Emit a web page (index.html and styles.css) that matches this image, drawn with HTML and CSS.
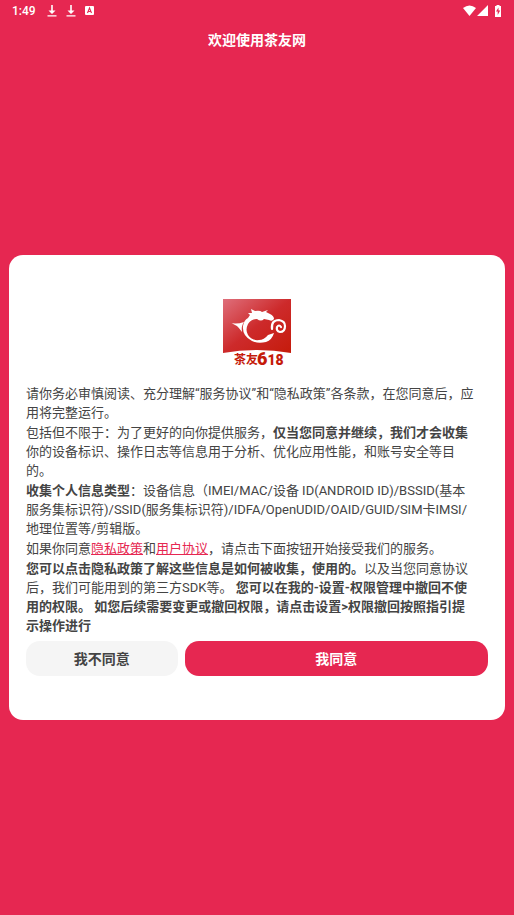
FILE: index.html
```html
<!DOCTYPE html>
<html lang="zh-CN">
<head>
    <meta charset="UTF-8">
    <meta name="viewport" content="width=device-width, initial-scale=1.0">
    <title>欢迎使用茶友网</title>
    <link rel="stylesheet" href="styles.css">
</head>
<body>
    <div class="status-bar">
        <div class="status-left">
            <span class="time">1:49</span>
            <svg class="download" width="10" height="12" viewBox="0 0 10 12" fill="#fff">
                <path d="M4.200 0h1.600v5.500h2.700L5 9 1.500 5.500h2.700zM0.500 10.300h9v1.300h-9z"/>
            </svg>
            <svg class="download" width="10" height="12" viewBox="0 0 10 12" fill="#fff">
                <path d="M4.200 0h1.600v5.500h2.700L5 9 1.500 5.500h2.700zM0.500 10.300h9v1.300h-9z"/>
            </svg>
            <svg class="app-icon" width="9" height="9" viewBox="0 0 9 9">
                <rect width="9" height="9" rx="1" fill="#fff"/>
                <path d="M2.500 7l2-5 2 5M3.300 5.500h2.400" fill="none" stroke="#e62751" stroke-width="1.100"/>
            </svg>
        </div>
        <svg class="status-right" width="40" height="12" viewBox="0 0 40 12" fill="#fff">
            <path d="M1 3Q7.500-2 14 3L7.500 11zM26 0v11H15zM33 1H34.500V0h3v1H39v11h-6z"/>
            <path d="M36.500 2.500l-2.500 4h1.700v3.500l2.500-4.500H36.500z" fill="#e62751"/>
        </svg>
    </div>

    <header>
        <h1>欢迎使用茶友网</h1>
    </header>

    <main>
        <div class="card">
            <svg class="logo" width="68" height="68" viewBox="0 0 68 68" role="img" aria-label="茶友618">
                <defs>
                    <linearGradient id="logoBg" x1="0" y1="0" x2="1" y2="1">
                        <stop offset="0" stop-color="#df6f7b"/>
                        <stop offset="0.5" stop-color="#cd2a2b"/>
                        <stop offset="1" stop-color="#c51b0b"/>
                    </linearGradient>
                </defs>
                <path d="M0 0h68v54Q34 48 0 54z" fill="url(#logoBg)"/>
                <!-- dragon teapot -->
                <g fill="#fff">
                    <path d="M5 23q7 3 16 0q-3 4-2 10Q14 25 5 23z"/>
                    <path d="M25 19l2-3-2-2 4 0-1-4 4 2q5-1 7 1l6-2-2 2 4 2q4 2 4 5-2 3-5 1l-5-1q-3 3-7 0-6 0-9 5-3 6 0 11 4 6 11 5 5 0 9-5l6-2q-2 7-8 9-8 2-14-1-10-5-9-15 1-6 5-8z"/>
                </g>
                <path d="M49 30q-1-9 7-9 6 1 6 6 0 6-5 6-4-1-3-5 2-3 4 0" fill="none" stroke="#fff" stroke-width="2.200" stroke-linecap="round"/>
                <text class="logo-name" x="11" y="65">茶友</text>
                <text class="logo-number" x="34" y="66"><tspan class="logo-six">6</tspan>18</text>
            </svg>

            <div class="terms">
                <p>请你务必审慎阅读、充分理解“服务协议”和“隐私政策”各条款，在您同意后，应<br>用将完整运行。</p>
                <p>包括但不限于：为了更好的向你提供服务，<b>仅当您同意并继续，我们才会收集</b><br>你的设备标识、操作日志等信息用于分析、优化应用性能，和账号安全等目<br>的。</p>
                <p><b>收集个人信息类型</b>：设备信息（IMEI/MAC/设备 ID(ANDROID ID)/BSSID(基本<br>服务集标识符)/SSID(服务集标识符)/IDFA/OpenUDID/OAID/GUID/SIM卡IMSI/<br>地理位置等/剪辑版。</p>
                <p>如果你同意<a href="#privacy">隐私政策</a>和<a href="#agreement">用户协议</a>，请点击下面按钮开始接受我们的服务。</p>
                <p><b>您可以点击隐私政策了解这些信息是如何被收集，使用的。</b>以及当您同意协议<br>后，我们可能用到的第三方SDK等。 <b>您可以在我的-设置-权限管理中撤回不使<br>用的权限。 如您后续需要变更或撤回权限，请点击设置&gt;权限撤回按照指引提<br>示操作进行</b></p>
            </div>

            <div class="buttons">
                <button type="button" class="btn btn-refuse">我不同意</button>
                <button type="button" class="btn btn-agree">我同意</button>
            </div>
        </div>
    </main>
</body>
</html>
```
FILE: styles.css
```css
* {
    box-sizing: border-box;
}

body {
    margin: 0;
    min-height: 100vh;
    display: flex;
    flex-direction: column;
    background-color: #e62751;
    color: #444;
    font-family: Roboto, "Noto Sans CJK SC", sans-serif;
}

.status-bar {
    display: flex;
    justify-content: space-between;
    align-items: center;
    height: 21px;
    padding: 0 12px;
    color: #fff;
}

.status-left {
    display: flex;
    align-items: center;
}

.time {
    font-size: 12px;
    font-weight: 500;
    line-height: 20px;
    margin-right: 2px;
}

.download {
    margin-left: 9px;
}

.app-icon {
    margin-left: 9px;
}

header {
    height: 38px;
    text-align: center;
}

h1 {
    margin: 0;
    color: #fff;
    font-size: 14px;
    font-weight: 700;
    line-height: 38px;
}

main {
    flex: 1;
    display: flex;
    align-items: center;
    padding: 0 9px;
}

.card {
    width: 100%;
    padding: 44px 17px;
    border-radius: 14px;
    background-color: #fff;
}

.logo {
    display: block;
    margin: 0 auto 17px;
    overflow: visible;
}

.logo-name {
    font-size: 12px;
    font-weight: bold;
    fill: #c51b0b;
}

.logo-number {
    font-size: 14px;
    font-weight: 900;
    fill: #c51b0b;
}

.logo-six {
    font-size: 18px;
}

.terms {
    font-size: 13px;
    line-height: 19px;
    white-space: nowrap;
}

.terms p {
    margin: 0 0 1px;
}

.terms b {
    font-weight: 700;
}

.terms a {
    color: #e62751;
    text-decoration: underline;
}

.buttons {
    display: flex;
    gap: 7px;
    margin-top: 6px;
}

.btn {
    height: 35px;
    padding: 0;
    border: none;
    border-radius: 14px;
    font-family: inherit;
    font-size: 14px;
    font-weight: 700;
    cursor: pointer;
}

.btn-refuse {
    flex: 1;
    background-color: #f5f5f5;
    color: #444;
}

.btn-agree {
    flex: 2;
    background-color: #e62751;
    color: #fff;
}
```
